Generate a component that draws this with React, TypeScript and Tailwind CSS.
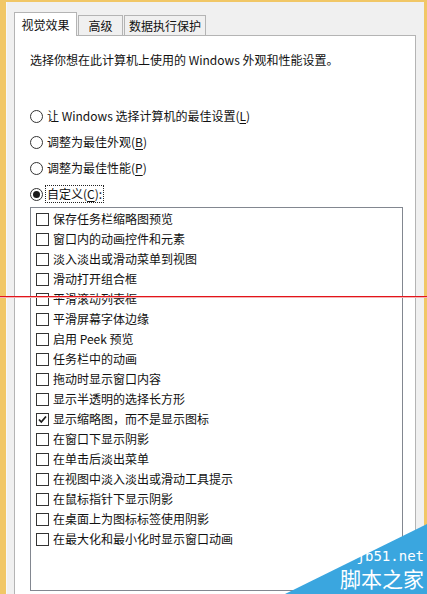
import React from "react";

const font = { fontFamily: '"Noto Sans CJK SC", "Microsoft YaHei", sans-serif' };

const options = [
  { label: "保存任务栏缩略图预览", checked: false },
  { label: "窗口内的动画控件和元素", checked: false },
  { label: "淡入淡出或滑动菜单到视图", checked: false },
  { label: "滑动打开组合框", checked: false },
  { label: "平滑滚动列表框", checked: false },
  { label: "平滑屏幕字体边缘", checked: false },
  { label: "启用 Peek 预览", checked: false },
  { label: "任务栏中的动画", checked: false },
  { label: "拖动时显示窗口内容", checked: false },
  { label: "显示半透明的选择长方形", checked: false },
  { label: "显示缩略图，而不是显示图标", checked: true },
  { label: "在窗口下显示阴影", checked: false },
  { label: "在单击后淡出菜单", checked: false },
  { label: "在视图中淡入淡出或滑动工具提示", checked: false },
  { label: "在鼠标指针下显示阴影", checked: false },
  { label: "在桌面上为图标标签使用阴影", checked: false },
  { label: "在最大化和最小化时显示窗口动画", checked: false },
];

function Radio({ checked }: { checked?: boolean }) {
  return (
    <span className="w-[13px] h-[13px] rounded-full border border-[#333333] bg-white flex items-center justify-center shrink-0">
      {checked && <span className="w-[7px] h-[7px] rounded-full bg-[#1a1a1a]" />}
    </span>
  );
}

function Check({ checked }: { checked?: boolean }) {
  return (
    <span className="w-[13px] h-[13px] border border-[#333333] bg-white flex items-center justify-center shrink-0">
      {checked && (
        <svg width="11" height="11" viewBox="0 0 11 11">
          <path d="M2 5.5 L4.3 8 L9 2.5" fill="none" stroke="#1a1a1a" strokeWidth="1.8" />
        </svg>
      )}
    </span>
  );
}

function RadioRow({ text, accel, checked }: { text: string; accel: string; checked?: boolean }) {
  return (
    <div className="h-[20px] flex items-center">
      <Radio checked={checked} />
      <span
        className={`ml-[2px] px-[1px] leading-[16px] ${checked ? "border border-dotted border-[#222]" : "border border-transparent"}`}
      >
        {text}(<span className="underline underline-offset-2">{accel}</span>){checked ? ":" : ""}
      </span>
    </div>
  );
}

export default function App() {
  return (
    <div
      className="relative w-[427px] h-[594px] overflow-hidden bg-[#f1c766] pt-[2px] pl-[6px] pr-[3px] text-[12px] text-[#111]"
      style={font}
    >
      <div className="h-full bg-[#f0f0f0] pl-[7px] pr-[8px] pt-[10px] border-l border-[#f8f8f8]">
        {/* Tabs */}
        <div className="flex items-end h-[23px]">
          <div className="relative z-10 h-[24px] -mb-px w-[63px] bg-white border border-b-0 border-[#b4b4b4] flex items-center justify-center">
            视觉效果
          </div>
          <div className="h-[20px] w-[45px] ml-[1px] bg-[#f0f0f0] border border-b-0 border-[#b4b4b4] flex items-center justify-center">
            高级
          </div>
          <div className="h-[20px] w-[82px] ml-[1px] bg-[#f0f0f0] border border-b-0 border-[#b4b4b4] flex items-center justify-center">
            数据执行保护
          </div>
        </div>

        {/* Panel */}
        <div className="h-[600px] bg-white border border-[#b4b4b4] pl-[15px] pt-[14px]">
          <div className="h-[20px] leading-[20px]">选择你想在此计算机上使用的 Windows 外观和性能设置。</div>

          <div className="mt-[36px] flex flex-col gap-[6px]">
            <RadioRow text="让 Windows 选择计算机的最佳设置" accel="L" />
            <RadioRow text="调整为最佳外观" accel="B" />
            <RadioRow text="调整为最佳性能" accel="P" />
            <RadioRow text="自定义" accel="C" checked />
          </div>

          <div className="mt-[3px] w-[373px] h-[384px] border border-[#828790] bg-white pt-[1px] pl-[5px]">
            {options.map((o) => (
              <div key={o.label} className="h-[20px] flex items-center gap-[4px]">
                <Check checked={o.checked} />
                <span className="leading-[16px]">{o.label}</span>
              </div>
            ))}
          </div>
        </div>
      </div>

      {/* red guide line */}
      <div className="absolute left-0 right-0 top-[296px] h-[2px] border-t border-[#e3141b] bg-[#f4b4b4]" />

      {/* watermark */}
      <svg className="absolute right-0 bottom-0" width="142" height="70" viewBox="0 0 142 70">
        <polygon points="0,70 142,70 142,0" fill="#3aa6df" />
      </svg>
      <div
        className="absolute right-[3px] bottom-[31px] text-white text-[14px] leading-[14px]"
        style={{ fontFamily: '"DejaVu Sans Mono", monospace' }}
      >
        jb51.net
      </div>
      <div className="absolute right-[3px] bottom-[3px] text-white text-[21px] leading-[26px]">脚本之家</div>
    </div>
  );
}
